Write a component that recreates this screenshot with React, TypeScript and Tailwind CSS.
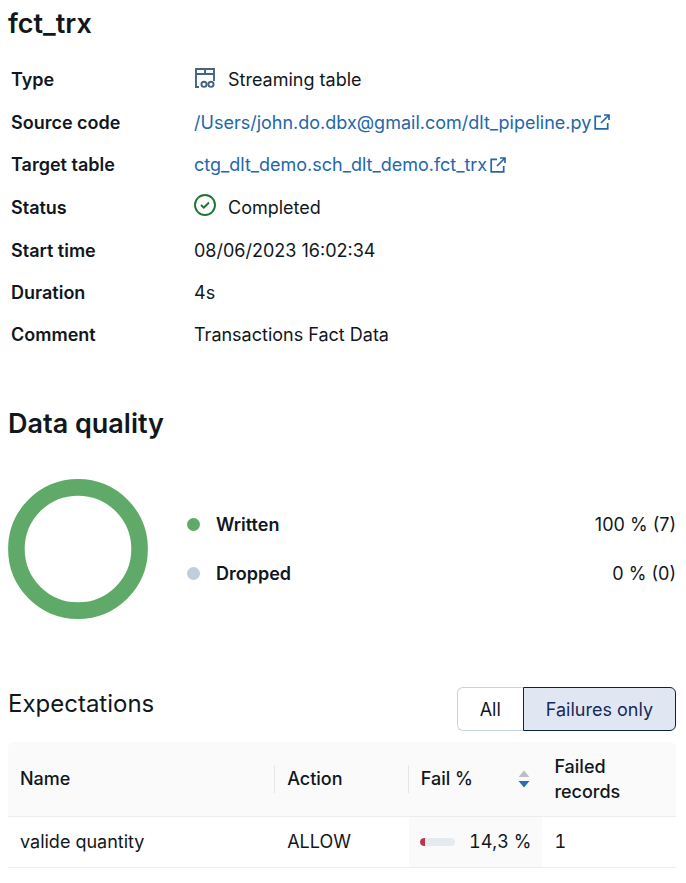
import { useState } from "react";
import type { ReactNode } from "react";
import clsx from "clsx";

type Expectation = {
    name: string;
    action: string;
    failPercent: number;
    failedRecords: number;
};

const expectations: Expectation[] = [
    { name: "valide quantity", action: "ALLOW", failPercent: 14.3, failedRecords: 1 },
];

const quality = [
    { label: "Written", value: "100 % (7)", dot: "bg-[#5faa69]" },
    { label: "Dropped", value: "0 % (0)", dot: "bg-[#c0cddc]" },
];

const formatPercent = (n: number) => `${String(n).replace(".", ",")} %`;

function StreamingTableIcon() {
    return (
        <svg className="mb-1" width="22" height="22" viewBox="0 0 22 22" fill="none" stroke="#46647f" strokeWidth="1.9" aria-hidden="true">
            <path d="M5 20H2V2H20V14" />
            <path d="M2 7H20M11 2V7" />
            <circle cx="10" cy="17.3" r="2.6" />
            <circle cx="17" cy="17.3" r="2.6" />
        </svg>
    );
}

function CheckCircleIcon() {
    return (
        <svg className="mb-1" width="22" height="22" viewBox="0 0 22 22" fill="none" stroke="#1f7530" aria-hidden="true">
            <circle cx="11" cy="11" r="10" strokeWidth="1.9" />
            <path d="M7 11L9.8 13.7L15 8.5" strokeWidth="2" />
        </svg>
    );
}

function NewWindowIcon() {
    return (
        <svg width="16" height="16" viewBox="0 0 16 16" fill="none" stroke="currentColor" strokeWidth="1.7" aria-hidden="true">
            <path d="M7 2.3H1.2V14.8H13.7V9" />
            <path d="M10 1H15V6M15 1L7 9" />
        </svg>
    );
}

function ExternalLink({ children }: { children: ReactNode }) {
    return (
        <a href="#" className="inline-flex items-center gap-[3px] text-[#2466ab] hover:underline">
            {children}
            <NewWindowIcon />
        </a>
    );
}

function DetailRow({ label, children }: { label: string; children: ReactNode }) {
    return (
        <div className="flex flex-1 items-center">
            <dt className="w-[183px] shrink-0 font-semibold">{label}</dt>
            <dd className="flex items-center gap-3">{children}</dd>
        </div>
    );
}

export default function App() {
    const [failuresOnly, setFailuresOnly] = useState(true);

    const rows = expectations.filter((e) => !failuresOnly || e.failedRecords > 0);

    return (
        <main className="bg-white pl-2 pr-[10px] pt-2 pb-4 font-['Inter',sans-serif] text-[18px] leading-[25px] text-[#11171c]">
            <h1 className="text-[27px] leading-8 font-semibold">fct_trx</h1>

            <dl className="mt-[18px] pl-[3px] flex flex-col min-h-[298px]">
                <DetailRow label="Type">
                    <StreamingTableIcon />
                    Streaming table
                </DetailRow>
                <DetailRow label="Source code">
                    <ExternalLink>/Users/john.do.dbx@gmail.com/dlt_pipeline.py</ExternalLink>
                </DetailRow>
                <DetailRow label="Target table">
                    <ExternalLink>ctg_dlt_demo.sch_dlt_demo.fct_trx</ExternalLink>
                </DetailRow>
                <DetailRow label="Status">
                    <CheckCircleIcon />
                    Completed
                </DetailRow>
                <DetailRow label="Start time">08/06/2023 16:02:34</DetailRow>
                <DetailRow label="Duration">4s</DetailRow>
                <DetailRow label="Comment">Transactions Fact Data</DetailRow>
            </dl>

            {/* Data quality */}
            <section className="mt-[52px]">
                <h2 className="text-[27px] leading-8 font-semibold">Data quality</h2>
                <div className="mt-[39px] flex items-center gap-[39px]">
                    <svg className="shrink-0" width="140" height="140" viewBox="0 0 140 140" fill="none" aria-hidden="true">
                        <circle cx="70" cy="70" r="61.6" stroke="#5faa69" strokeWidth="16.6" />
                    </svg>
                    <ul className="flex-1 flex flex-col gap-6">
                        {quality.map((item) => (
                            <li key={item.label} className="flex items-center">
                                <span className={clsx("size-[13px] rounded-full mr-4", item.dot)} />
                                <span className="font-semibold">{item.label}</span>
                                <span className="ml-auto">{item.value}</span>
                            </li>
                        ))}
                    </ul>
                </div>
            </section>

            {/* Expectations */}
            <section className="mt-[68px]">
                <div className="flex items-start justify-between">
                    <h3 className="text-[24px] leading-[34px]">Expectations</h3>
                    <div className="flex">
                        <button
                            type="button"
                            aria-pressed={!failuresOnly}
                            onClick={() => setFailuresOnly(false)}
                            className={clsx(
                                "h-11 px-[22px] rounded-l-md border",
                                failuresOnly ? "border-r-0 border-[#c7d5e2] bg-white" : "border-[#0e2145] bg-[#e0e7f2] text-[#17295a]"
                            )}
                        >
                            All
                        </button>
                        <button
                            type="button"
                            aria-pressed={failuresOnly}
                            onClick={() => setFailuresOnly(true)}
                            className={clsx(
                                "h-11 px-[22px] rounded-r-md border",
                                failuresOnly ? "border-[#0e2145] bg-[#e0e7f2] text-[#17295a]" : "border-l-0 border-[#c7d5e2] bg-white"
                            )}
                        >
                            Failures only
                        </button>
                    </div>
                </div>

                <table className="mt-[11px] w-full table-fixed text-left">
                    <thead>
                        <tr className="h-[74px] border-b border-[#ececec]">
                            <th className="w-2/5 rounded-tl-md bg-[#fafafa] font-medium">
                                <div className="flex items-center h-7 pl-3 border-r border-[#e6e6e6]">Name</div>
                            </th>
                            <th className="w-1/5 bg-[#fafafa] font-medium">
                                <div className="flex items-center h-7 pl-3 border-r border-[#e6e6e6]">Action</div>
                            </th>
                            <th className="w-1/5 bg-[#fafafa] font-medium">
                                <div className="flex items-center justify-between px-3">
                                    Fail %
                                    <svg width="12" height="18" viewBox="0 0 12 18" aria-hidden="true">
                                        <path d="M6 0.5L11.5 7H0.5Z" fill="#bfbfbf" />
                                        <path d="M6 17.5L11.5 11H0.5Z" fill="#2b6cb5" />
                                    </svg>
                                </div>
                            </th>
                            <th className="w-1/5 rounded-tr-md bg-[#fafafa] pl-3 font-medium">Failed records</th>
                        </tr>
                    </thead>
                    <tbody>
                        {rows.map((row) => (
                            <tr key={row.name} className="h-[51px] border-b border-[#ececec]">
                                <td className="pl-3">{row.name}</td>
                                <td className="pl-3">{row.action}</td>
                                <td className="bg-[#fafafa] px-[11px]">
                                    <div className="flex items-center justify-between">
                                        <span className="h-2 w-[35px] rounded-full bg-[#e3ebef] overflow-hidden">
                                            <span className="block h-full rounded-l-full bg-[#c0334d]" style={{ width: `${row.failPercent}%` }} />
                                        </span>
                                        <span className="whitespace-nowrap tabular-nums">{formatPercent(row.failPercent)}</span>
                                    </div>
                                </td>
                                <td className="pl-3 tabular-nums">{row.failedRecords}</td>
                            </tr>
                        ))}
                    </tbody>
                </table>
            </section>
        </main>
    );
}
